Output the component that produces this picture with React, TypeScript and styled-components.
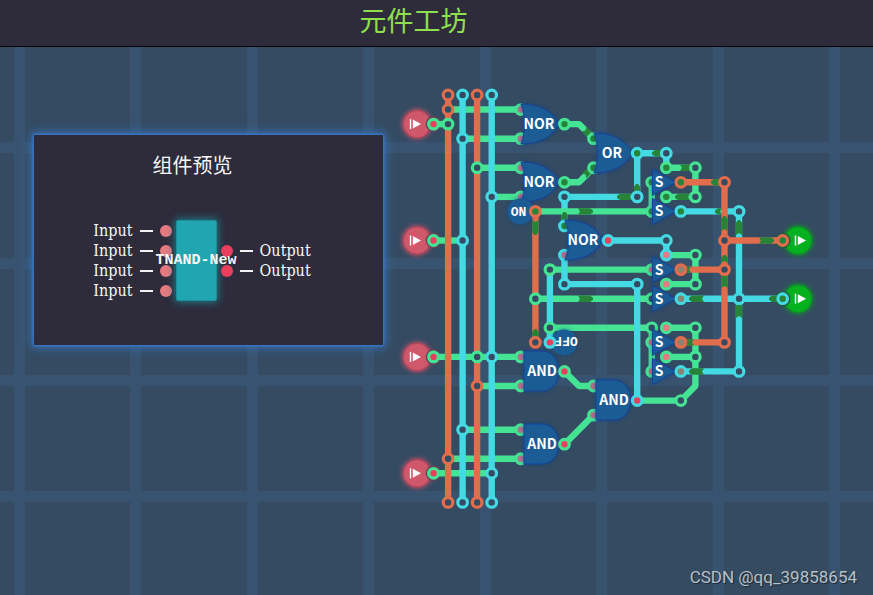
import React from "react";
import styled, { createGlobalStyle } from "styled-components";

const C = {
  board: "#344b62",
  green: "#45e394",
  cyan: "#43dae3",
  orange: "#e26d4d",
  flow: "#278338",
  gate: "#1d5c94",
  gateEdge: "#15429a",
  red: "#e93f5d",
  pink: "#e57a80",
  dim: "#b9708a",
  grey: "#8b8270",
};

const GlobalStyle = createGlobalStyle`
  *, *::before, *::after { box-sizing: border-box; }
  body { margin: 0; background: ${C.board}; }
`;

const Page = styled.div`
  position: relative;
  display: flex;
  flex-direction: column;
  min-height: 100vh;
  overflow: hidden;
  color: #f7f7f7;
  font-family: "Noto Sans CJK SC", "Noto Sans", sans-serif;
`;

const Header = styled.header`
  display: flex;
  justify-content: center;
  align-items: center;
  height: 47px;
  padding: 0 46px 6px 0;
  background: #2e2b3b;
  border-bottom: 1px solid #050508;
`;

const Title = styled.h1`
  margin: 0;
  color: #8ee04e;
  font-size: 27px;
  font-weight: 400;
  line-height: 40px;
`;

const Board = styled.main`
  flex: 1;
  display: flex;
  align-items: flex-start;
  gap: 9px;
  padding: 35px 16px 24px 34px;
  background-color: ${C.board};
  background-image:
    linear-gradient(90deg, #38536f 11px, transparent 11px, transparent 116px, #38536f 116px, #38536f 127px, transparent 127px),
    linear-gradient(180deg, #38536f 11px, transparent 11px, transparent 116px, #38536f 116px, #38536f 127px, transparent 127px);
  background-size: 233px 100%, 100% 233px;
  background-position: 14px 0, 0 95px;
`;

const Panel = styled.section`
  flex: 0 1 349px;
  min-height: 210px;
  margin-top: 53px;
  padding: 15px 15px 44px 0;
  background: #2e2b3b;
  box-shadow: 0 0 2px 1px #3a7ad2, 0 0 10px 2px #3a75c0;
`;

const PanelTitle = styled.h2`
  margin: 0 17px 40px 0;
  text-align: center;
  font-size: 20px;
  font-weight: 400;
  line-height: 30px;
`;

const Preview = styled.div`
  display: flex;
  justify-content: center;
  align-items: center;
  gap: 4px;
  padding-left: 2px;
`;

const PinList = styled.ul`
  margin: 0;
  padding: 0;
  list-style: none;
`;

const Pin = styled.li<{ $output?: boolean }>`
  display: flex;
  flex-direction: ${(p) => (p.$output ? "row-reverse" : "row")};
  align-items: center;
  gap: 7px;
  height: 20px;
  font-family: "DejaVu Serif Condensed", "DejaVu Serif", serif;
  font-size: 16px;
  line-height: 20px;
`;

const Lead = styled.span`
  width: 13px;
  height: 2px;
  background: #f2f2f2;
`;

const Dot = styled.span<{ $color: string }>`
  width: 12px;
  height: 12px;
  border-radius: 50%;
  background: ${(p) => p.$color};
`;

const Chip = styled.div`
  display: flex;
  justify-content: center;
  align-items: center;
  width: 41px;
  height: 81px;
  border: 1px solid #1b8f99;
  border-radius: 2px;
  background: #21a5b0;
  box-shadow: 0 0 8px 1px #1e7f8a;
  font-family: "Liberation Mono", monospace;
  font-size: 15px;
  font-weight: 700;
  line-height: 20px;
  white-space: nowrap;
`;

const ChipName = styled.span`
  position: relative;
`;

const Circuit = styled.svg`
  flex: 0 1 436px;
  min-width: 0;
  height: auto;
`;

const Credit = styled.footer`
  position: absolute;
  right: 16px;
  bottom: 6px;
  color: #b9c0c6;
  font-family: Roboto, "Liberation Sans", sans-serif;
  font-size: 17px;
  line-height: 24px;
  text-shadow: 1px 1px 1px #1b2836;
`;

type Point = [number, number];

const STEP = 14.55;
const px = (n: number) => 433.5 + n * STEP;
const py = (n: number) => 95 + n * STEP;

const path = (points: Point[]) =>
  points.map(([x, y], i) => `${i ? "L" : "M"}${px(x).toFixed(1)} ${py(y).toFixed(1)}`).join(" ");

const Wire = ({ color, points }: { color: string; points: Point[] }) => (
  <path d={path(points)} fill="none" stroke={color} strokeWidth={6.4} strokeLinejoin="bevel" />
);

const Node = ({ at, color, fill = C.board }: { at: Point; color: string; fill?: string }) => (
  <circle cx={px(at[0])} cy={py(at[1])} r={4.8} fill={fill} stroke={color} strokeWidth={3.2} />
);

/* A marker that shows which way the signal moves; x, y is its tip. */
const Flow = ({ x, y, turn = 0, size = 14 }: { x: number; y: number; turn?: number; size?: number }) => (
  <path
    d={`M0 -1 L-3 -3.2 H${-size} L${2 - size} 0 L${-size} 3.2 H-3 L0 1 Z`}
    fill={C.flow}
    transform={`translate(${x} ${y}) rotate(${turn})`}
  />
);

const Label = ({ x, y, children }: { x: number; y: number; children: string }) => (
  <text
    x={x}
    y={y}
    textAnchor="middle"
    fontFamily="Noto Sans CJK SC, Noto Sans, sans-serif"
    fontWeight={700}
    fontSize={14}
    fill="#fff"
  >
    {children}
  </text>
);

const orShape = "M0 -20 C17 -20 31 -14 38 0 C31 14 17 20 0 20 C5 8 5 -8 0 -20 Z";
const andShape = "M0 -20 H18 C40 -20 40 20 18 20 H0 Z";

const Gate = ({ kind, x, y }: { kind: "NOR" | "OR" | "AND"; x: number; y: number }) => (
  <g>
    <g filter="url(#shade)" fill={C.gate} stroke={C.gateEdge} strokeWidth={1} transform={`translate(${x} ${y})`}>
      <path d={kind === "AND" ? andShape : orShape} />
      {kind === "NOR" && <circle cx={37.5} cy={0} r={2.8} />}
    </g>
    <Label x={x + 18} y={y + 5}>{kind}</Label>
  </g>
);

const Switch = ({ row }: { row: number }) => (
  <g>
    <path
      d={`M652.5 ${py(row) - 13} L676 ${py(row)} L652.5 ${py(row) + 13} Z`}
      fill={C.gate}
      stroke={C.gateEdge}
      strokeWidth={1}
      filter="url(#shade)"
    />
    <Label x={659} y={py(row) + 5}>S</Label>
  </g>
);

const Constant = ({ x, y, turn = 0, children }: { x: number; y: number; turn?: number; children: string }) => (
  <g transform={`translate(${x} ${y}) rotate(${turn})`}>
    <circle r={13} fill={C.gate} filter="url(#shade)" />
    <text x={-2} y={5} textAnchor="middle" fontFamily="Liberation Mono, monospace" fontWeight={700} fontSize={13} fill="#fff">
      {children}
    </text>
  </g>
);

const Port = ({ row, output }: { row: number; output?: boolean }) => {
  const y = py(row);
  const cx = output ? 798 : 417;
  const pin = output ? px(24) : px(0);
  const glyph = output ? 795.5 : 410.5;
  return (
    <g>
      <circle cx={cx} cy={y} r={14.5} fill={output ? "#08a51f" : "#e04f69"} filter="url(#glow)" />
      <circle cx={cx} cy={y} r={13.6} fill={output ? "#06b120" : "#cf586b"} stroke={output ? "#0a9a1e" : "#b34456"} />
      <circle cx={pin} cy={y} r={7.8} fill={output ? "#24593f" : "#644456"} />
      <path d={`M${glyph} ${y - 5} V${y + 5}`} stroke="#fff" strokeWidth={1.4} />
      <path d={`M${glyph + 2.3} ${y - 4.5} L${glyph + 10.5} ${y} L${glyph + 2.3} ${y + 4.5} Z`} fill="#fff" />
    </g>
  );
};

const wires: [string, Point[]][] = [
  ["green", [[0, 2], [1, 2]]],
  ["green", [[1, 1], [6, 1]]],
  ["green", [[2, 3], [6, 3]]],
  ["green", [[3, 5], [6, 5]]],
  ["green", [[4, 7], [6, 7]]],
  ["green", [[0, 10], [2, 10]]],
  ["green", [[0, 18], [6, 18]]],
  ["green", [[3, 20], [6, 20]]],
  ["green", [[2, 23], [6, 23]]],
  ["green", [[1, 25], [6, 25]]],
  ["green", [[0, 26], [4, 26]]],
  ["green", [[9, 2], [10, 2], [11, 3]]],
  ["green", [[9, 6], [10, 6], [11, 5]]],
  ["green", [[9, 19], [10, 20], [11, 20]]],
  ["green", [[9, 24], [11, 22]]],
  ["cyan", [[14, 4], [16, 4], [16, 5]]],
  ["cyan", [[14, 4], [14, 7], [9, 7], [9, 9]]],
  ["green", [[16, 5], [18, 5], [18, 7], [16, 7]]],
  ["green", [[7, 8], [15, 8], [15, 6]]],
  ["green", [[8, 12], [15, 12]]],
  ["green", [[7, 14], [15, 14]]],
  ["green", [[8, 16], [15, 16], [15, 19]]],
  ["cyan", [[12, 10], [16, 10], [16, 11]]],
  ["green", [[16, 11], [18, 11], [18, 13], [16, 13]]],
  ["green", [[14, 21], [17, 21], [18, 20], [18, 16], [16, 16]]],
  ["green", [[16, 18], [18, 18]]],
  ["cyan", [[9, 11], [9, 13], [14, 13], [14, 21]]],
  ["cyan", [[8, 12], [8, 17]]],
  ["cyan", [[17, 8], [21, 8], [21, 19], [17, 19]]],
  ["cyan", [[17, 14], [24, 14]]],
  ["orange", [[17, 6], [20, 6], [20, 17], [17, 17]]],
  ["orange", [[17, 12], [20, 12]]],
  ["orange", [[20, 10], [24, 10]]],
  ["orange", [[7, 8], [7, 17]]],
  ["orange", [[1, 0], [1, 28]]],
  ["cyan", [[2, 0], [2, 28]]],
  ["orange", [[3, 0], [3, 28]]],
  ["cyan", [[4, 0], [4, 28]]],
];

const flows: [number, number, number, number][] = [
  [590.5, 135.5, 45, 9],
  [590.5, 169.5, -45, 9],
  [593, 211.4, 0, 15],
  [593, 298.7, 0, 15],
  [652, 153.2, 180, 12],
  [637, 184, -90, 9],
  [617, 196.9, 180, 15],
  [694, 167.8, 0, 14],
  [675, 196.9, 180, 15],
  [711, 182.3, 180, 9],
  [715, 211.4, 180, 7],
  [724.5, 216, -90, 15],
  [739, 220, -90, 15],
  [774, 240.5, 0, 15],
  [769, 298.7, 180, 10],
  [689, 298.7, 180, 15],
  [689, 371.5, 180, 15],
  [684, 269.6, 180, 7],
  [684, 342.4, 180, 10],
  [724.5, 255, -90, 8],
  [724.5, 273, -90, 15],
  [739, 303, -90, 15],
  [535.4, 235, 90, 15],
  [535.4, 329, -90, 9],
  [564.5, 212, -90, 10],
];

const inputPins: [Point, string, string][] = [
  [[6, 1], "green", "dim"], [[6, 3], "green", "dim"], [[6, 5], "green", "dim"], [[6, 7], "green", "dim"],
  [[6, 18], "green", "dim"], [[6, 20], "green", "dim"], [[6, 23], "green", "dim"], [[6, 25], "green", "dim"],
  [[11, 3], "green", "flow"], [[11, 5], "green", "flow"], [[11, 20], "green", "dim"], [[11, 22], "green", "dim"],
  [[9, 9], "cyan", "flow"], [[9, 11], "cyan", "dim"],
  [[15, 6], "green", "flow"], [[15, 8], "green", "flow"], [[15, 12], "green", "dim"], [[15, 14], "green", "board"],
  [[15, 16], "green", "board"], [[15, 17], "green", "dim"], [[15, 19], "green", "dim"],
];

const nodes: [Point, string, string][] = [
  [[1, 0], "orange", "board"], [[2, 0], "cyan", "board"], [[3, 0], "orange", "board"], [[4, 0], "cyan", "board"],
  [[1, 28], "orange", "board"], [[2, 28], "cyan", "board"], [[3, 28], "orange", "board"], [[4, 28], "cyan", "board"],
  [[1, 1], "orange", "board"], [[1, 2], "green", "board"], [[2, 3], "cyan", "board"], [[3, 5], "green", "board"],
  [[4, 7], "cyan", "board"], [[2, 10], "cyan", "board"], [[3, 18], "green", "board"], [[4, 18], "cyan", "board"],
  [[3, 20], "orange", "board"], [[2, 23], "cyan", "board"], [[1, 25], "orange", "board"], [[4, 26], "cyan", "board"],
  [[0, 2], "green", "red"], [[0, 10], "green", "red"], [[0, 18], "green", "red"], [[0, 26], "green", "red"],
  [[9, 2], "green", "flow"], [[9, 6], "green", "flow"], [[14, 4], "cyan", "flow"],
  [[16, 4], "cyan", "board"], [[14, 7], "cyan", "board"], [[9, 7], "cyan", "board"],
  [[16, 5], "green", "flow"], [[18, 5], "green", "board"], [[18, 7], "green", "board"], [[16, 7], "green", "flow"],
  [[17, 6], "orange", "flow"], [[20, 6], "orange", "board"], [[17, 8], "cyan", "flow"], [[21, 8], "cyan", "board"],
  [[7, 8], "orange", "flow"], [[7, 14], "green", "board"], [[7, 17], "orange", "board"],
  [[12, 10], "cyan", "red"], [[16, 10], "cyan", "board"], [[16, 11], "cyan", "pink"],
  [[18, 11], "green", "board"], [[18, 13], "green", "board"], [[16, 13], "green", "pink"],
  [[8, 12], "green", "board"], [[8, 16], "green", "board"], [[8, 17], "cyan", "red"],
  [[9, 13], "cyan", "board"], [[14, 13], "cyan", "board"],
  [[20, 10], "orange", "board"], [[20, 12], "orange", "board"], [[20, 17], "orange", "board"],
  [[24, 10], "orange", "flow"], [[24, 14], "cyan", "flow"], [[21, 14], "cyan", "board"], [[21, 19], "cyan", "board"],
  [[17, 12], "orange", "grey"], [[17, 14], "cyan", "grey"], [[17, 17], "orange", "grey"], [[17, 19], "cyan", "grey"],
  [[16, 16], "green", "pink"], [[16, 18], "green", "pink"], [[18, 16], "green", "board"], [[18, 18], "green", "board"],
  [[9, 19], "green", "red"], [[9, 24], "green", "red"], [[14, 21], "cyan", "red"], [[17, 21], "green", "board"],
];

const palette = C as Record<string, string>;

const CircuitBoard = () => (
  <Circuit viewBox="392 82 436 434" role="img" aria-label="TNAND-New">
    <defs>
      <filter id="glow" x="-50%" y="-50%" width="200%" height="200%">
        <feGaussianBlur stdDeviation="2.4" />
      </filter>
      <filter id="shade" x="-40%" y="-40%" width="180%" height="180%">
        <feDropShadow dx="0" dy="0" stdDeviation="2" floodColor="#173f8a" floodOpacity="0.6" />
      </filter>
    </defs>
    {[2, 10, 18, 26].map((row) => <Port key={row} row={row} />)}
    {[10, 14].map((row) => <Port key={row} row={row} output />)}
    {wires.map(([color, points], i) => <Wire key={i} color={palette[color]} points={points} />)}
    {flows.map(([x, y, turn, size], i) => <Flow key={i} x={x} y={y} turn={turn} size={size} />)}
    {inputPins.map(([at, color, fill], i) => <Node key={i} at={at} color={palette[color]} fill={palette[fill]} />)}
    <Gate kind="NOR" x={521} y={124} />
    <Gate kind="NOR" x={521} y={182} />
    <Gate kind="OR" x={594} y={153} />
    <Gate kind="NOR" x={565} y={240} />
    <Gate kind="AND" x={524} y={371} />
    <Gate kind="AND" x={524} y={444} />
    <Gate kind="AND" x={596} y={400} />
    <Constant x={520.5} y={211.4}>ON</Constant>
    <Constant x={564} y={342.4} turn={180}>OFF</Constant>
    {[6, 8, 12, 14, 17, 19].map((row) => <Switch key={row} row={row} />)}
    {nodes.map(([at, color, fill], i) => <Node key={i} at={at} color={palette[color]} fill={palette[fill]} />)}
  </Circuit>
);

const inputs = ["Input", "Input", "Input", "Input"];
const outputs = ["Output", "Output"];

export default function App() {
  return (
    <Page>
      <GlobalStyle />
      <Header>
        <Title>元件工坊</Title>
      </Header>
      <Board>
        <Panel>
          <PanelTitle>组件预览</PanelTitle>
          <Preview>
            <PinList>
              {inputs.map((name, i) => (
                <Pin key={i}>{name}<Lead /><Dot $color={C.pink} /></Pin>
              ))}
            </PinList>
            <Chip><ChipName>TNAND-New</ChipName></Chip>
            <PinList>
              {outputs.map((name, i) => (
                <Pin key={i} $output>{name}<Lead /><Dot $color={C.red} /></Pin>
              ))}
            </PinList>
          </Preview>
        </Panel>
        <CircuitBoard />
      </Board>
      <Credit>CSDN @qq_39858654</Credit>
    </Page>
  );
}
